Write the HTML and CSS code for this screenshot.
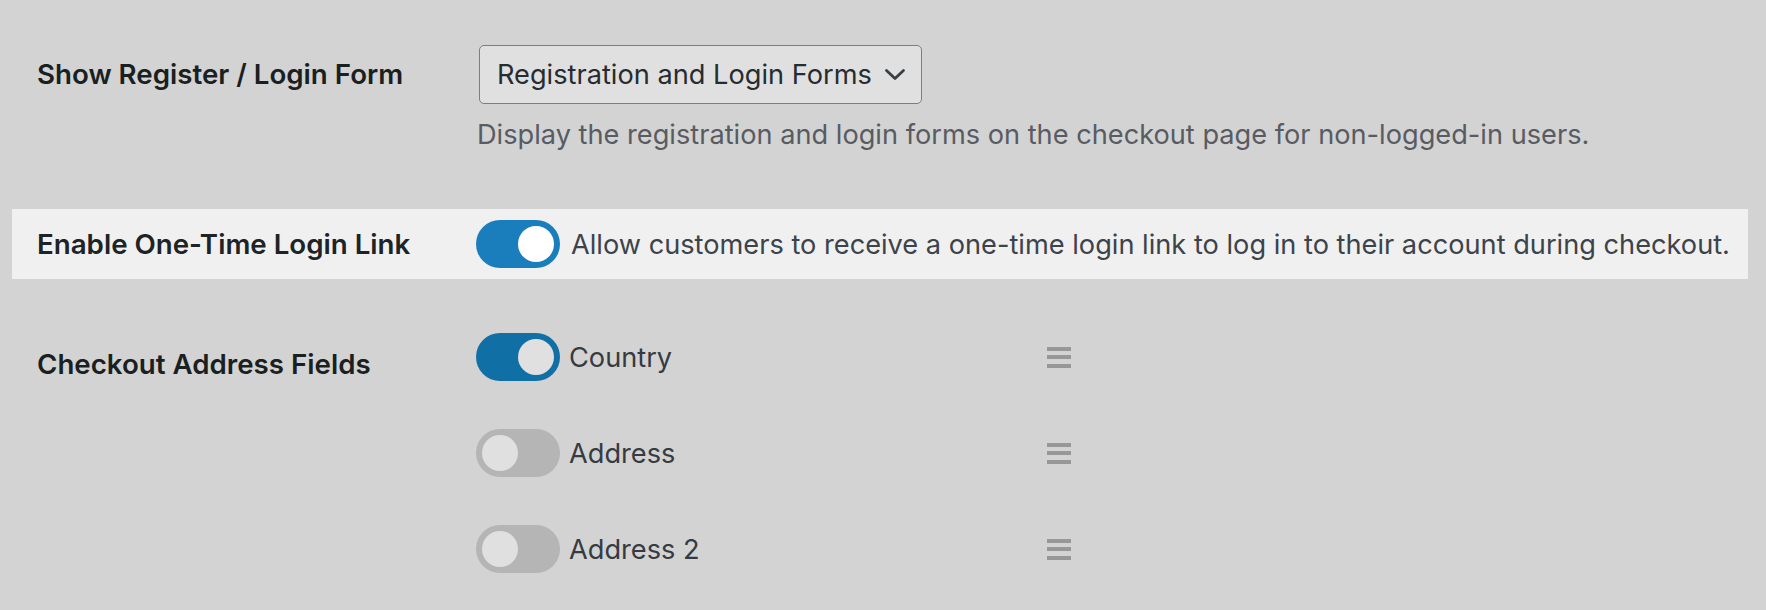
FILE: index.html
```html
<!DOCTYPE html>
<html lang="en">
<head>
<meta charset="utf-8">
<title>Checkout settings</title>
<link rel="stylesheet" href="styles.css">
</head>
<body>
<div class="page">
  <div class="row row-first">
    <div class="label label-mid">Show Register / Login Form</div>
    <div class="field">
      <div class="select">
        <span class="select-text">Registration and Login Forms</span>
        <svg class="chevron" width="22" height="13" viewBox="0 0 22 13"><path d="M2.5 2.5 L11 10.5 L19.5 2.5" fill="none" stroke="#3a3f44" stroke-width="2.8" stroke-linecap="round" stroke-linejoin="round"/></svg>
      </div>
      <p class="desc">Display the registration and login forms on the checkout page for non-logged-in users.</p>
    </div>
  </div>

  <div class="row row-highlight">
    <div class="label label-mid label-hl">Enable One-Time Login Link</div>
    <div class="inline-field">
      <span class="toggle toggle-on-hl"><span class="knob"></span></span>
      <span class="inline-text">Allow customers to receive a one-time login link to log in to their account during checkout.</span>
    </div>
  </div>

  <div class="row row-fields">
    <div class="label label-top">Checkout Address Fields</div>
    <div class="field-list">
      <div class="field-item">
        <span class="toggle toggle-on"><span class="knob"></span></span>
        <span class="item-name">Country</span>
        <span class="handle"><i></i><i></i><i></i></span>
      </div>
      <div class="field-item">
        <span class="toggle toggle-off"><span class="knob"></span></span>
        <span class="item-name">Address</span>
        <span class="handle"><i></i><i></i><i></i></span>
      </div>
      <div class="field-item">
        <span class="toggle toggle-off"><span class="knob"></span></span>
        <span class="item-name">Address 2</span>
        <span class="handle"><i></i><i></i><i></i></span>
      </div>
    </div>
  </div>
</div>
</body>
</html>
```

FILE: styles.css
```css
html, body {
  margin: 0;
  padding: 0;
  background: #d3d3d3;
}
body {
  font-family: Inter, "Open Sans", "Liberation Sans", sans-serif;
  font-size: 27.2px;
  color: #1a1f22;
}
.page {
  padding: 45px 18px 0 12px;
}
.row {
  display: flex;
  align-items: flex-start;
  padding: 0 25px;
}
.label {
  width: 439px;
  flex: none;
  font-weight: 600;
  font-size: 27.7px;
  color: #1a1f22;
}
.label-mid {
  height: 59px;
  line-height: 59px;
}
.label-hl {
  height: 48px;
  line-height: 48px;
  color: #1d2327;
}
.label-top {
  padding-top: 16px;
  line-height: 30px;
}
.field {
  display: flex;
  flex-direction: column;
  align-items: flex-start;
}
.select {
  display: inline-flex;
  align-items: center;
  box-sizing: border-box;
  height: 59px;
  margin-left: 3px;
  padding: 0 15px 0 17px;
  gap: 12px;
  background: #e0e0e0;
  border: 1.5px solid #7b7e82;
  border-radius: 5px;
  color: #262c30;
}
.chevron {
  display: block;
}
.desc {
  margin: 16px 0 0 1px;
  line-height: 30px;
  color: #585c62;
}
.row-highlight {
  margin-top: 59px;
  background: #f0f0f0;
  padding-top: 11px;
  padding-bottom: 11px;
  align-items: center;
}
.inline-field {
  display: flex;
  align-items: center;
  gap: 11px;
}
.inline-text {
  white-space: nowrap;
  color: #3c434a;
}
.toggle {
  display: flex;
  align-items: center;
  box-sizing: border-box;
  width: 84px;
  height: 48px;
  border-radius: 24px;
  padding: 0 6px;
  flex: none;
}
.knob {
  width: 36px;
  height: 36px;
  border-radius: 50%;
  background: #e0e0e0;
}
.toggle-on-hl {
  background: #1a7ebd;
  justify-content: flex-end;
}
.toggle-on-hl .knob {
  background: #ffffff;
}
.toggle-on {
  background: #106fa5;
  justify-content: flex-end;
}
.toggle-off {
  background: #b5b5b5;
  justify-content: flex-start;
}
.row-fields {
  margin-top: 54px;
}
.field-list {
  display: flex;
  flex-direction: column;
  gap: 48px;
}
.field-item {
  display: grid;
  grid-template-columns: 84px 1fr 24px;
  align-items: center;
  column-gap: 9px;
  width: 595px;
}
.item-name {
  color: #353b41;
}
.handle {
  display: flex;
  flex-direction: column;
  gap: 4.5px;
  width: 24px;
}
.handle i {
  display: block;
  height: 4px;
  background: #979797;
}
```
